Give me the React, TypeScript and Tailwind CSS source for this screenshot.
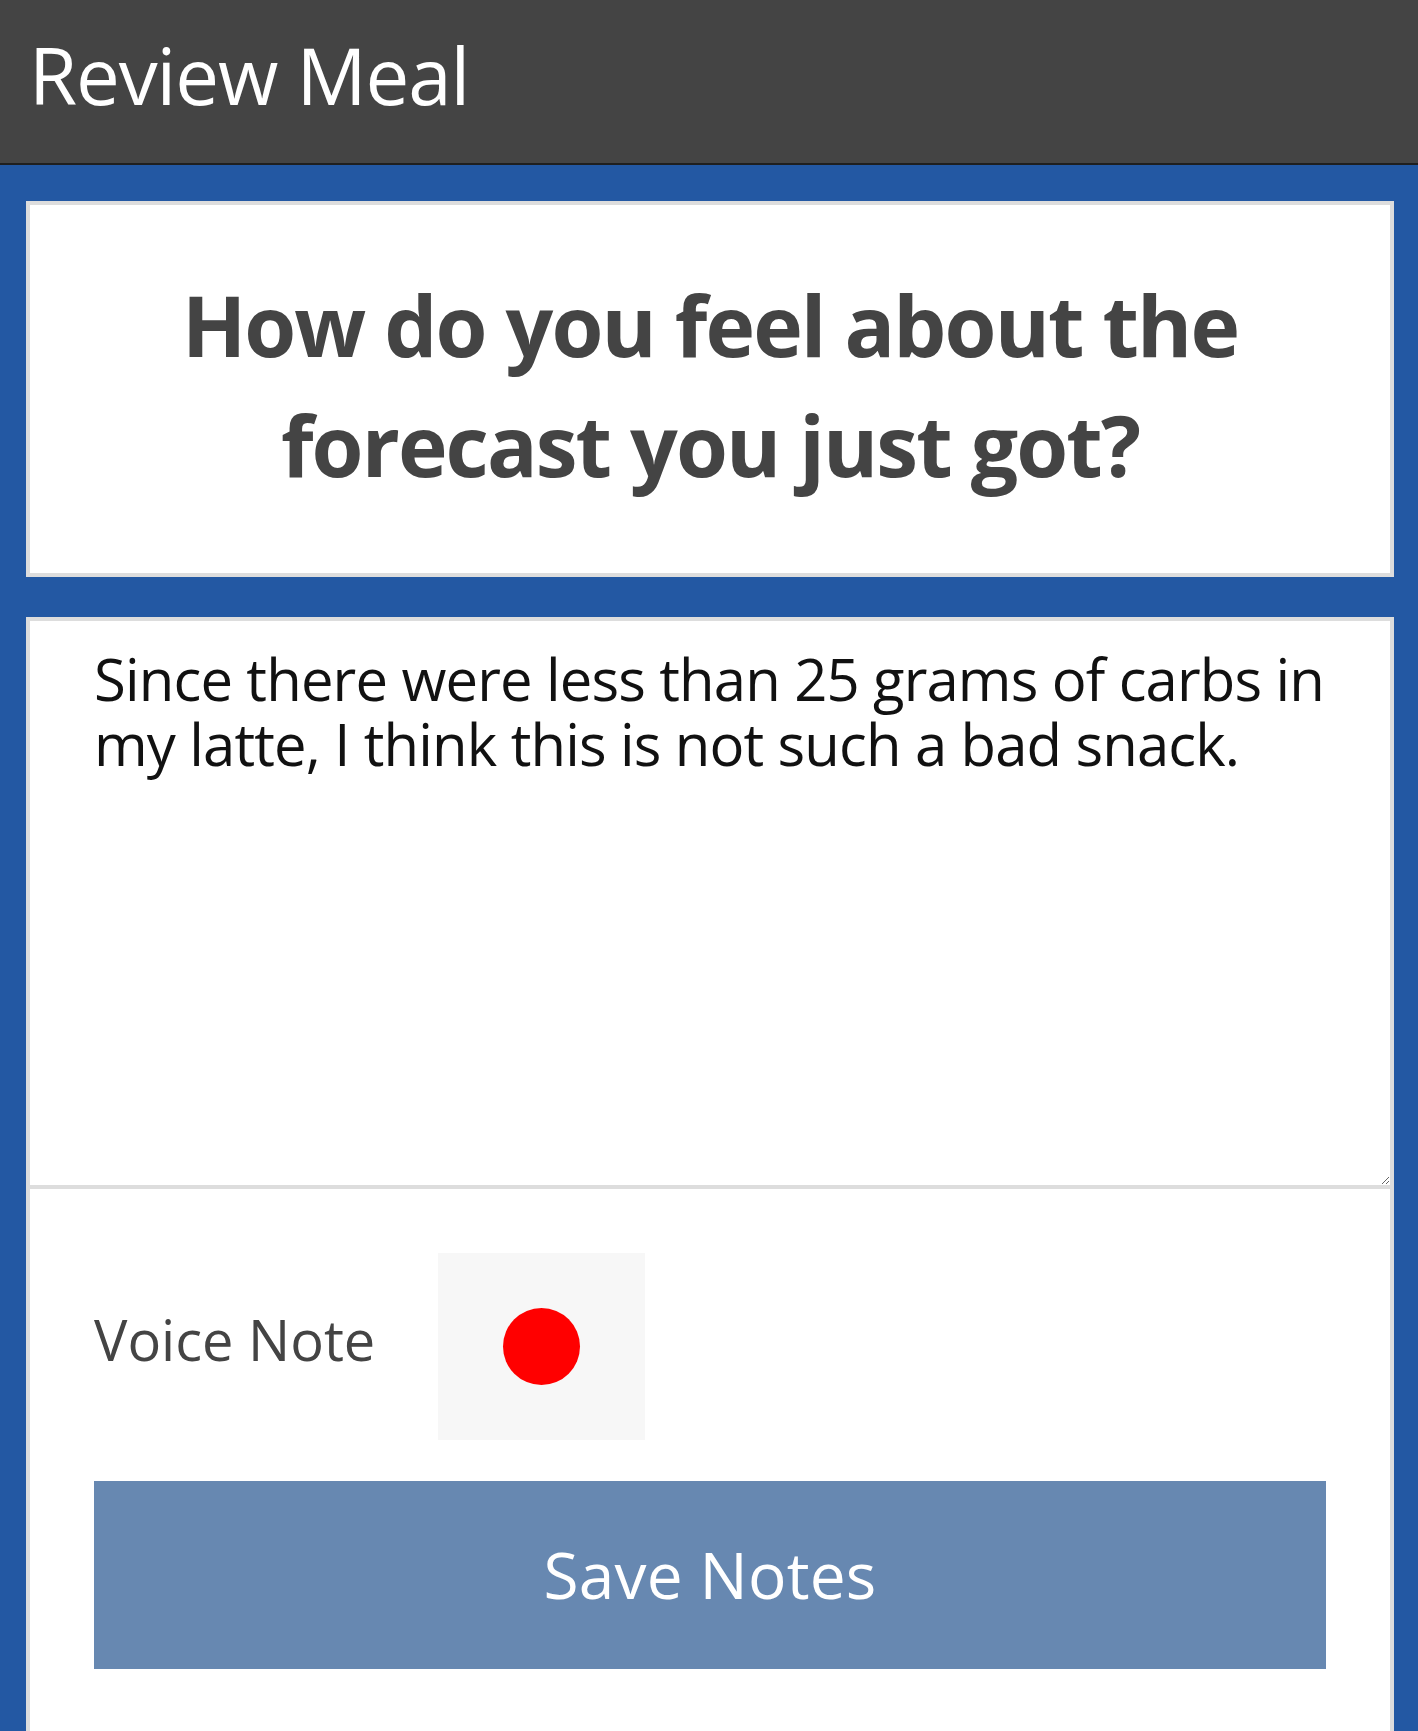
export default function App() {
  return (
    <div className="h-[1731px] w-full flex flex-col overflow-hidden bg-[#2358a3] font-['Open_Sans','Noto_Sans',sans-serif]">
      {/* top bar */}
      <header className="h-[165px] shrink-0 bg-[#444444] border-b-2 border-[#1f1f1f] pl-[29px] pt-[22px]">
        <h1 className="text-[78px] leading-[106px] font-normal tracking-[-1.1px] text-white">Review Meal</h1>
      </header>

      <main className="flex-1 flex flex-col gap-[40px] pt-[36px] pl-[26px] pr-[24px]">
        <div className="h-[376px] shrink-0 bg-white border-4 border-[#dddddd] pt-[60px] px-[40px] text-center">
          <h2 className="text-[84px] leading-[120px] font-bold tracking-[-1.9px] text-[#444444]">
            How do you feel about the forecast you just got?
          </h2>
        </div>

        <div className="flex-1 flex flex-col bg-white">
          <textarea
            className="h-[572px] w-full shrink-0 border-4 border-[#dddddd] bg-white pt-[25px] pl-[64px] pr-[40px] text-[58px] leading-[65px] tracking-[-0.85px] text-[#111111] outline-none"
            defaultValue="Since there were less than 25 grams of carbs in my latte, I think this is not such a bad snack."
          />

          <div className="flex-1 border-x-4 border-[#dddddd] px-[64px] pt-[64px]">
            <div className="flex items-start h-[187px]">
              <span className="w-[344px] shrink-0 mt-[48px] text-[56px] leading-[76px] text-[#444444]">Voice Note</span>
              <button className="w-[207px] h-[187px] bg-[#f7f7f7] flex items-center justify-center">
                <span className="block w-[77px] h-[77px] rounded-full bg-[#ff0000]" />
              </button>
            </div>

            <button className="mt-[41px] h-[188px] w-full bg-[#6788b1] text-white text-[64px] leading-none tracking-[0.2px]">
              Save Notes
            </button>
          </div>
        </div>
      </main>
    </div>
  );
}
